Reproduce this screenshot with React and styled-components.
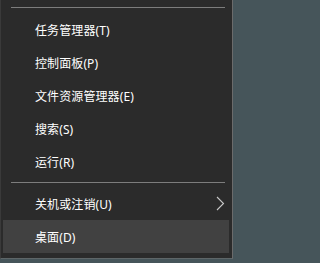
import React from "react";
import styled, { createGlobalStyle } from "styled-components";

const GlobalStyle = createGlobalStyle`
  body {
    margin: 0;
    background: #46555a;
    font-family: "Segoe UI", "Noto Sans", "Noto Sans CJK SC", sans-serif;
  }
`;

const Menu = styled.div`
  width: 226px;
  padding: 7px 3px 5px 2px;
  background: #2b2b2b;
  border-left: 1px solid #3a3a3a;
  border-right: 1px solid #6b6b6b;
  border-bottom: 1px solid #5e6668;
  display: flex;
  flex-direction: column;
`;

const Separator = styled.div`
  height: 1px;
  margin: ${(p) => (p.$first ? "0 4px 5px 8px" : "4px 4px 4px 8px")};
  background: #7d7d7d;
`;

const Item = styled.div`
  height: 33px;
  display: flex;
  align-items: center;
  justify-content: space-between;
  padding: 0 4px 0 32px;
  background: ${(p) => (p.$active ? "#414141" : "transparent")};
  color: #ffffff;
  font-size: 12px;
  letter-spacing: 0.1px;
`;

const Chevron = () => (
  <svg width="9" height="15" viewBox="0 0 9 15">
    <polyline
      points="1,1 7.5,7.5 1,14"
      fill="none"
      stroke="#c8c8c8"
      strokeWidth="1.1"
    />
  </svg>
);

const items = [
  "任务管理器(T)",
  "控制面板(P)",
  "文件资源管理器(E)",
  "搜索(S)",
  "运行(R)",
];

export default function App() {
  return (
    <>
      <GlobalStyle />
      <Menu>
        <Separator $first />
        {items.map((label) => (
          <Item key={label}>{label}</Item>
        ))}
        <Separator />
        <Item>
          关机或注销(U)
          <Chevron />
        </Item>
        <Item $active>桌面(D)</Item>
      </Menu>
    </>
  );
}
